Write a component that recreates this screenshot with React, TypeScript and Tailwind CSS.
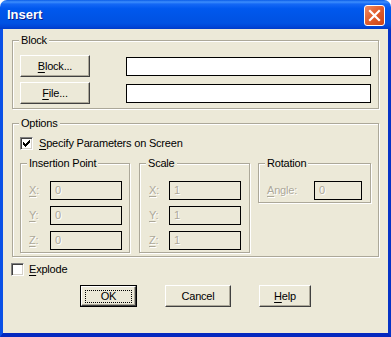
import React from "react";

const FONT = "font-['Liberation_Sans',Arial,sans-serif]";
const DIS = "text-[#aca899] [text-shadow:1px_1px_0_#fff]";
const T = "text-[11px] tracking-[-0.2px]";

function U({ children }: { children: React.ReactNode }) {
  return <span className="underline underline-offset-[2px] decoration-[1px]">{children}</span>;
}

function Group({ label, className, children }: { label: string; className?: string; children?: React.ReactNode }) {
  return (
    <div className={`relative border border-[#aca899] shadow-[inset_1px_1px_0_#fff,1px_1px_0_#fff] ${className ?? ""}`}>
      <span className={`absolute left-[6px] top-[-8px] bg-[#ece9d8] px-[2px] ${T} leading-[14px] text-black`}>{label}</span>
      {children}
    </div>
  );
}

function Btn({ children, w, def }: { children: React.ReactNode; w: string; def?: boolean }) {
  const inner = (
    <div className={`relative h-full w-full flex items-center justify-center border border-t-white border-l-white border-r-[#404040] border-b-[#404040] shadow-[inset_-1px_-1px_0_#aca899] bg-[#ece9d8] ${T} text-black`}>
      {def && <div className="absolute left-[3px] right-[3px] top-[3px] bottom-[2px] border border-dotted border-black" />}
      <span className="relative">{children}</span>
    </div>
  );
  if (def) {
    return <div className={`h-[22px] ${w} border border-black`}>{inner}</div>;
  }
  return <div className={`h-[22px] ${w}`}>{inner}</div>;
}

function Check({ checked }: { checked?: boolean }) {
  return (
    <div className="relative w-[13px] h-[13px] shrink-0 bg-white border border-t-[#808080] border-l-[#808080] border-b-white border-r-white shadow-[inset_1px_1px_0_#404040,inset_-1px_-1px_0_#d4d0c8]">
      {checked && (
        <svg className="absolute left-[2px] top-[2px]" width="7" height="7" viewBox="0 0 7 7" shapeRendering="crispEdges">
          <path
            fill="#000"
            d="M6 0h1v3h-1zM5 1h1v3h-1zM4 2h1v3h-1zM3 3h1v3h-1zM2 4h1v3h-1zM1 3h1v3h-1zM0 2h1v3h-1z"
          />
        </svg>
      )}
    </div>
  );
}

function DisField({ label, value, labelW, inputW }: { label: React.ReactNode; value: string; labelW: string; inputW: string }) {
  return (
    <div className="flex items-center h-[19px]">
      <span className={`${labelW} ${T} ${DIS}`}>{label}</span>
      <div className={`${inputW} h-[19px] border border-black bg-[#ece9d8] flex items-center pl-[4px] ${T} ${DIS}`}>{value}</div>
    </div>
  );
}

export default function App() {
  return (
    <div className={`w-[391px] h-[337px] bg-white ${FONT}`}>
      <div className="flex flex-col w-[391px] h-[337px] rounded-t-[7px] overflow-hidden">
        <div className="h-[29px] shrink-0 flex items-start justify-between pl-[7px] pr-[6px] bg-[linear-gradient(to_bottom,#0a5ce8_0%,#3d8efc_7%,#1468f5_14%,#0058ee_30%,#0054e6_60%,#0052e3_80%,#0046d8_92%,#003bc8_100%)]">
          <span className="mt-[7px] text-white font-bold text-[13px] leading-[16px] [text-shadow:1px_1px_0_#0a1e8a]">Insert</span>
          <div className="mt-[5px] w-[21px] h-[21px] rounded-[3px] border border-white bg-[linear-gradient(135deg,#ee8d68_0%,#e2602f_45%,#cc4416_100%)] flex items-center justify-center">
            <svg width="19" height="19" viewBox="0 0 19 19">
              <path d="M5 5L14 14M14 5L5 14" stroke="#fff" strokeWidth="2.2" strokeLinecap="square" />
            </svg>
          </div>
        </div>
        <div className="flex-1 flex flex-col border-l-[3px] border-r-[3px] border-b-[4px] border-l-[#0a50e6] border-r-[#0633c6] border-b-[#0428bf] bg-[#ece9d8] pt-[11px] px-[9px]">
          <Group label="Block" className="h-[69px] pt-[14px] pl-[7px] pr-[7px] flex flex-col gap-[5px]">
            <div className="flex items-center">
              <Btn w="w-[70px]"><U>B</U>lock...</Btn>
              <div className="ml-[36px] flex-1 h-[19px] bg-white border border-black" />
            </div>
            <div className="flex items-center">
              <Btn w="w-[70px]"><U>F</U>ile...</Btn>
              <div className="ml-[36px] flex-1 h-[19px] bg-white border border-black" />
            </div>
          </Group>

          <Group label="Options" className="mt-[14px] h-[134px] pt-[13px] pl-[7px] flex flex-col">
            <div className="flex items-center gap-[6px] h-[13px]">
              <Check checked />
              <span className={`${T} text-black`}><U>S</U>pecify Parameters on Screen</span>
            </div>
            <div className="mt-[13px] flex items-start">
              <Group label="Insertion Point" className="w-[110px] h-[90px] pt-[17px] pl-[8px] flex flex-col gap-[6px]">
                <DisField label={<><U>X</U>:</>} value="0" labelW="w-[21px]" inputW="w-[72px]" />
                <DisField label={<><U>Y</U>:</>} value="0" labelW="w-[21px]" inputW="w-[72px]" />
                <DisField label={<><U>Z</U>:</>} value="0" labelW="w-[21px]" inputW="w-[72px]" />
              </Group>
              <Group label="Scale" className="ml-[9px] w-[111px] h-[90px] pt-[17px] pl-[9px] flex flex-col gap-[6px]">
                <DisField label={<><U>X</U>:</>} value="1" labelW="w-[20px]" inputW="w-[72px]" />
                <DisField label={<><U>Y</U>:</>} value="1" labelW="w-[20px]" inputW="w-[72px]" />
                <DisField label={<><U>Z</U>:</>} value="1" labelW="w-[20px]" inputW="w-[72px]" />
              </Group>
              <Group label="Rotation" className="ml-[8px] w-[113px] h-[40px] pt-[17px] pl-[8px]">
                <DisField label={<><U>A</U>ngle:</>} value="0" labelW="w-[47px]" inputW="w-[48px]" />
              </Group>
            </div>
          </Group>

          <div className="mt-[6px] -ml-[1px] flex items-center gap-[5px] h-[13px]">
            <Check />
            <span className={`${T} text-black`}><U>E</U>xplode</span>
          </div>

          <div className="mt-[9px] flex items-center">
            <div className="ml-[68px]">
              <Btn w="w-[57px]" def>OK</Btn>
            </div>
            <div className="ml-[28px]">
              <Btn w="w-[66px]">Cancel</Btn>
            </div>
            <div className="ml-[28px]">
              <Btn w="w-[52px]"><U>H</U>elp</Btn>
            </div>
          </div>
        </div>
      </div>
    </div>
  );
}
